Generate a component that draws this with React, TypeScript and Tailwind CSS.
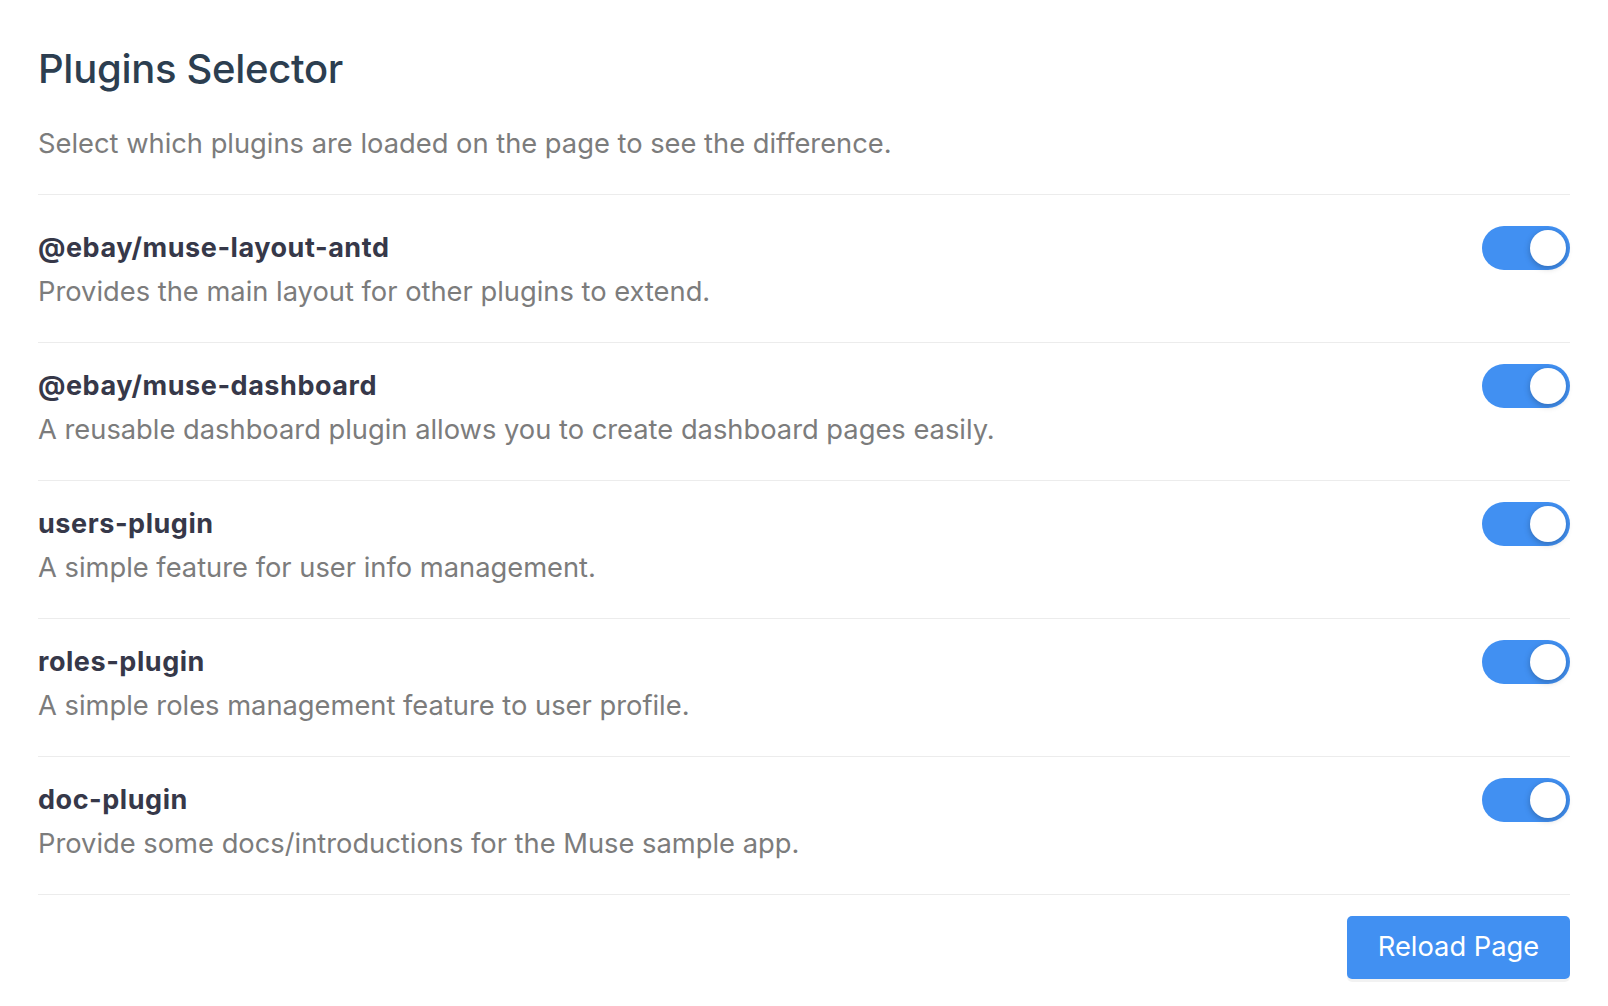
import { useState } from "react";

const plugins = [
  { name: "@ebay/muse-layout-antd", desc: "Provides the main layout for other plugins to extend." },
  { name: "@ebay/muse-dashboard", desc: "A reusable dashboard plugin allows you to create dashboard pages easily." },
  { name: "users-plugin", desc: "A simple feature for user info management." },
  { name: "roles-plugin", desc: "A simple roles management feature to user profile." },
  { name: "doc-plugin", desc: "Provide some docs/introductions for the Muse sample app." },
];

function Toggle({ on, onChange }: { on: boolean; onChange: () => void }) {
  return (
    <button
      onClick={onChange}
      className={`relative h-[44px] w-[88px] shrink-0 rounded-full transition ${on ? "bg-[#4190f2]" : "bg-[#c9ccd1]"}`}
    >
      <span
        className={`absolute top-[4px] h-[36px] w-[36px] rounded-full bg-white shadow-[0_2px_6px_rgba(0,0,0,0.25)] transition-all ${on ? "left-[48px]" : "left-[4px]"}`}
      />
    </button>
  );
}

export default function App() {
  const [enabled, setEnabled] = useState<boolean[]>(plugins.map(() => true));

  return (
    <div className="min-h-screen bg-white px-[38px] pt-[46px] font-['Inter',sans-serif]">
      <h1 className="text-[40px] leading-[46px] font-medium text-[#2c3e50] tracking-[-0.3px]">Plugins Selector</h1>
      <p className="mt-[30px] text-[27.3px] leading-[44px] text-[#7c7c7c]">
        Select which plugins are loaded on the page to see the difference.
      </p>

      <div className="mt-[28px] border-t border-[#ececec] pt-[10px]">
        {plugins.map((p, i) => (
          <div key={p.name} className="flex items-start justify-between border-b border-[#ececec] pt-[21px] pb-[28px]">
            <div>
              <div className="text-[27px] leading-[44px] font-bold tracking-[0.55px] text-[#363849]">{p.name}</div>
              <div className="text-[27.3px] leading-[44px] text-[#7c7c7c]">{p.desc}</div>
            </div>
            <Toggle
              on={enabled[i]}
              onChange={() => setEnabled(enabled.map((v, j) => (j === i ? !v : v)))}
            />
          </div>
        ))}
      </div>

      <div className="flex justify-end pt-[21px]">
        <button
          onClick={() => window.location.reload()}
          className="h-[63px] w-[223px] rounded-[5px] bg-[#4190f2] text-[27.3px] text-white shadow-[0_3px_0_rgba(0,0,0,0.05)]"
        >
          Reload Page
        </button>
      </div>
    </div>
  );
}
